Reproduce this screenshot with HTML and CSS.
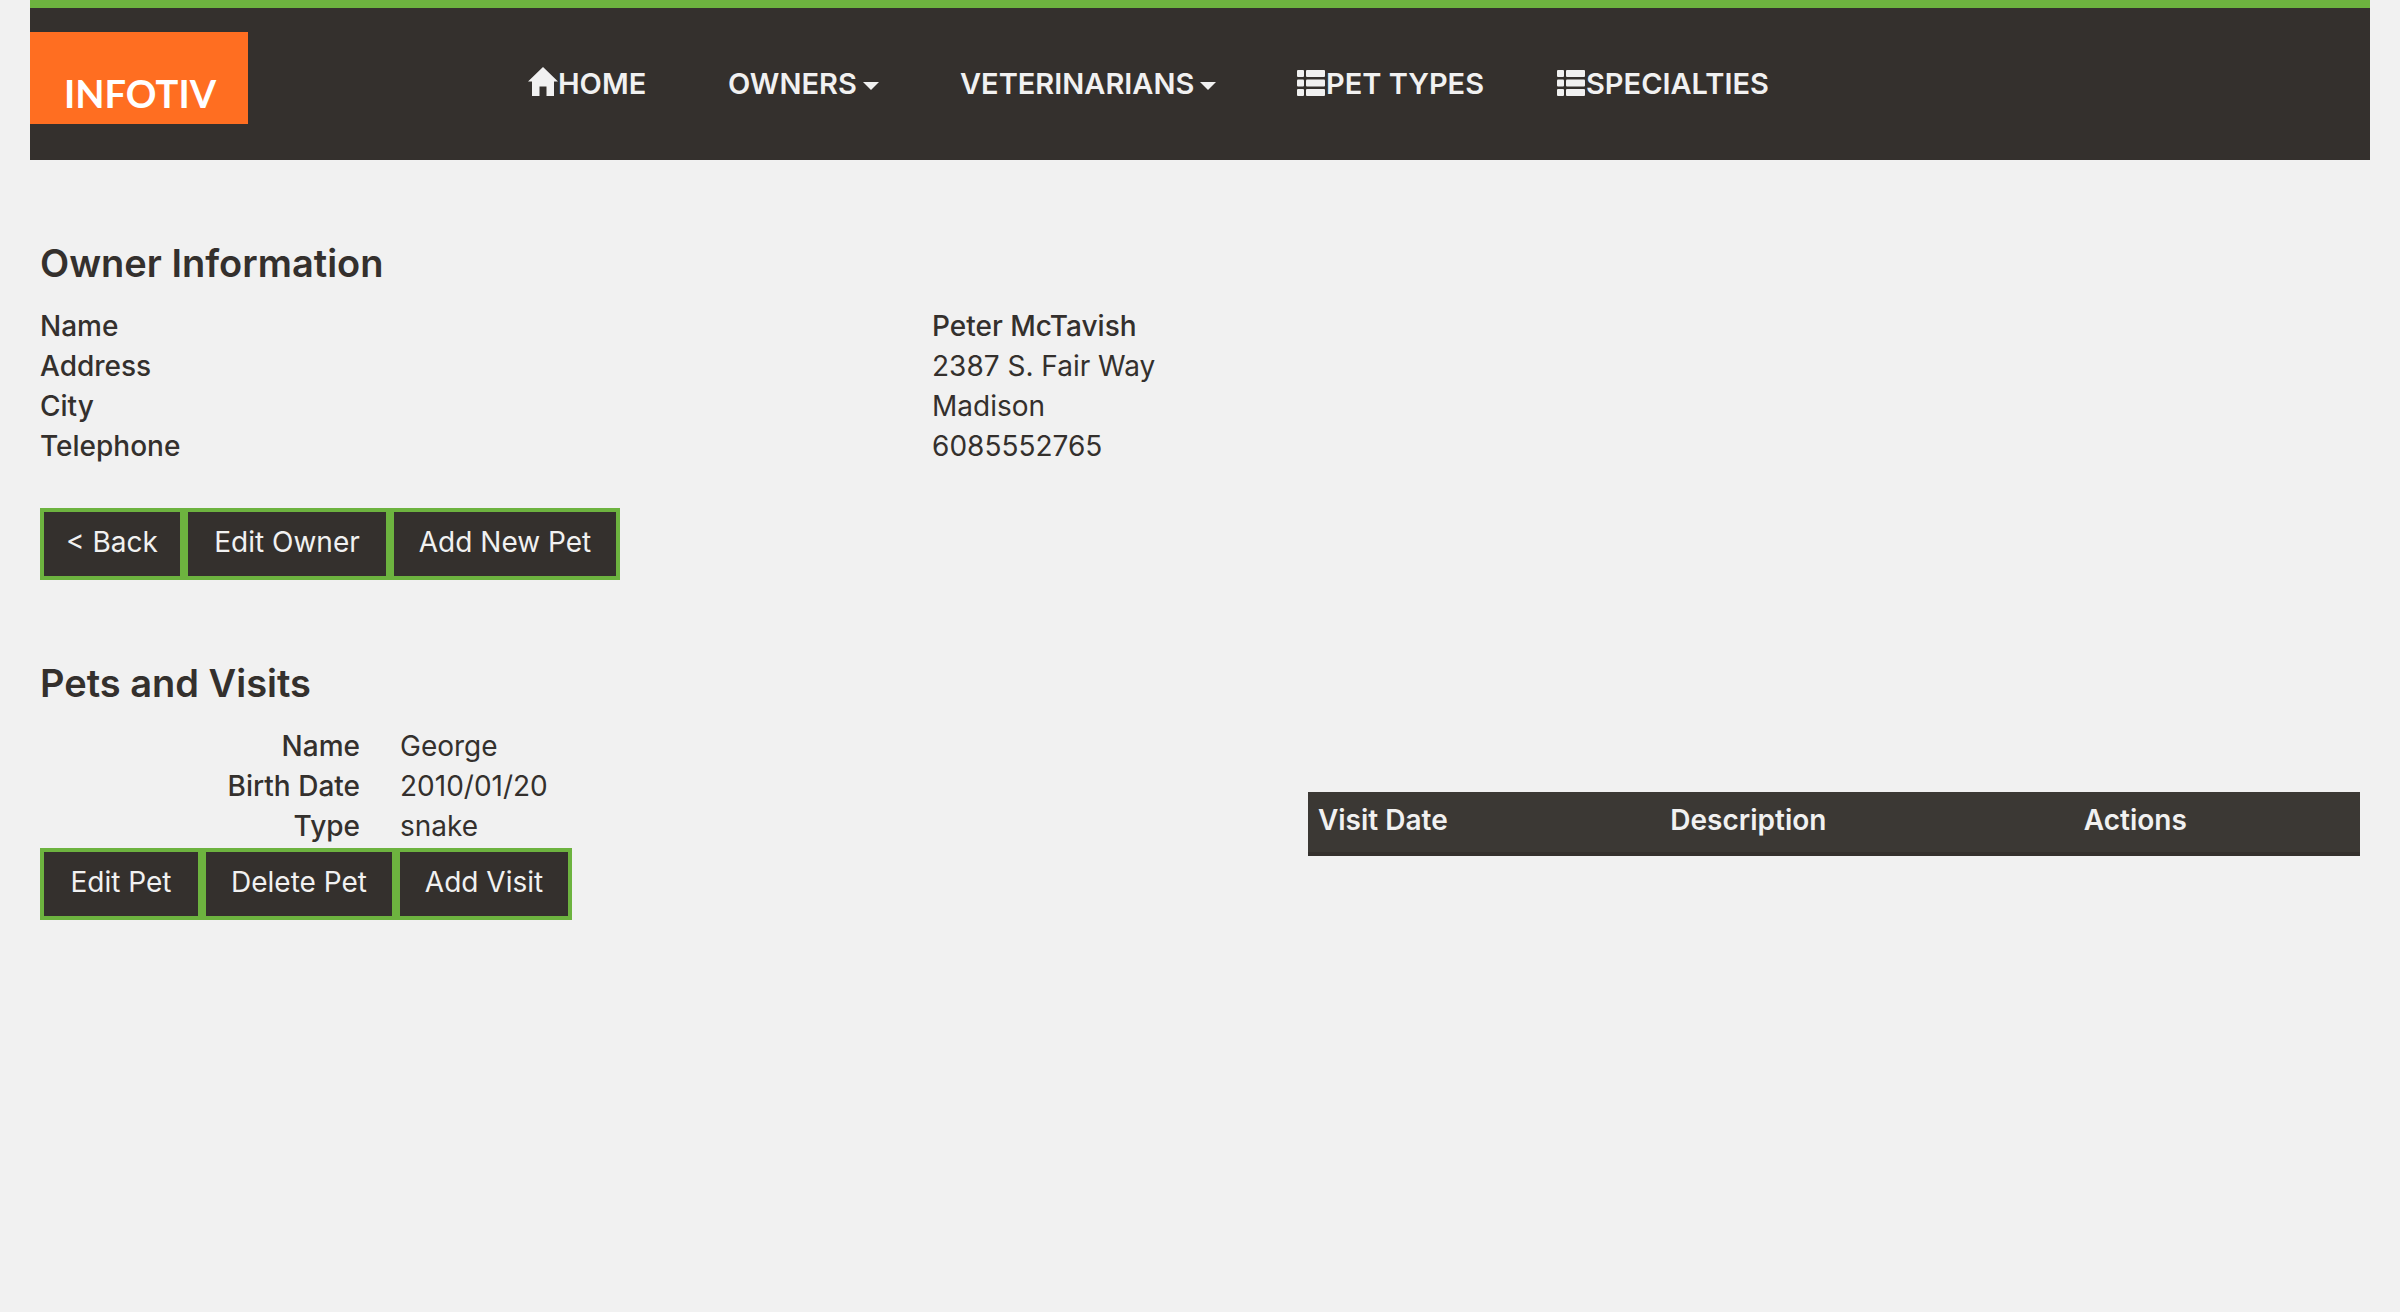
FILE: index.html
```html
<!DOCTYPE html>
<html lang="en">
<head>
<meta charset="utf-8">
<title>Owner Information</title>
<link rel="stylesheet" href="styles.css">
</head>
<body>
<header class="navbar">
  <a class="brand" href="#">INFOTIV</a>
  <nav>
    <ul class="menu">
      <li><a href="#"><svg class="icon" viewBox="0 0 30 30" aria-hidden="true"><path d="M15 1 30 15.500H26V30H18.500V20.500H11.500V30H4V15.500H0Z"/></svg>HOME</a></li>
      <li><a href="#">OWNERS<span class="caret"></span></a></li>
      <li><a href="#">VETERINARIANS<span class="caret"></span></a></li>
      <li><a href="#"><svg class="icon" viewBox="0 0 30 30" aria-hidden="true"><rect x="1" y="4" width="7" height="7" rx="1"/><rect x="10" y="4" width="19" height="7" rx="1"/><rect x="1" y="13.500" width="7" height="7" rx="1"/><rect x="10" y="13.500" width="19" height="7" rx="1"/><rect x="1" y="23" width="7" height="7" rx="1"/><rect x="10" y="23" width="19" height="7" rx="1"/></svg>PET TYPES</a></li>
      <li><a href="#"><svg class="icon" viewBox="0 0 30 30" aria-hidden="true"><rect x="1" y="4" width="7" height="7" rx="1"/><rect x="10" y="4" width="19" height="7" rx="1"/><rect x="1" y="13.500" width="7" height="7" rx="1"/><rect x="10" y="13.500" width="19" height="7" rx="1"/><rect x="1" y="23" width="7" height="7" rx="1"/><rect x="10" y="23" width="19" height="7" rx="1"/></svg>SPECIALTIES</a></li>
    </ul>
  </nav>
</header>
<main class="content">
  <section class="owner">
    <h2>Owner Information</h2>
    <table class="details">
      <tbody>
        <tr><th scope="row">Name</th><td class="strong">Peter McTavish</td></tr>
        <tr><th scope="row">Address</th><td>2387 S. Fair Way</td></tr>
        <tr><th scope="row">City</th><td>Madison</td></tr>
        <tr><th scope="row">Telephone</th><td>6085552765</td></tr>
      </tbody>
    </table>
    <div class="buttons">
      <button type="button">&lt; Back</button><button type="button">Edit Owner</button><button type="button">Add New Pet</button>
    </div>
  </section>
  <section class="pets">
    <h2>Pets and Visits</h2>
    <div class="pet">
      <div class="pet-info">
        <dl>
          <dt>Name</dt><dd>George</dd>
          <dt>Birth Date</dt><dd>2010/01/20</dd>
          <dt>Type</dt><dd>snake</dd>
        </dl>
        <div class="buttons">
          <button type="button">Edit Pet</button><button type="button">Delete Pet</button><button type="button">Add Visit</button>
        </div>
      </div>
      <table class="visits">
        <thead><tr><th scope="col" class="date">Visit Date</th><th scope="col" class="description">Description</th><th scope="col">Actions</th></tr></thead>
      </table>
    </div>
  </section>
</main>
</body>
</html>
```

FILE: styles.css
```css
* { box-sizing: border-box; }

body {
  margin: 0;
  padding: 0 30px;
  background: #f1f1f1;
  color: #34302d;
  font: 28px/40px Inter, "Liberation Sans", sans-serif;
}

.navbar {
  display: flex;
  align-items: flex-start;
  gap: 280px;
  min-height: 160px;
  border-top: 8px solid #6db33f;
  background: #34302d;
}

.brand {
  width: 218px;
  height: 92px;
  margin-top: 24px;
  padding: 36px 34px 0;
  background: #ff6e21;
  color: #fff;
  font: 700 38px/50px Lato, sans-serif;
  text-decoration: none;
}

.menu {
  display: grid;
  grid-template-columns: 200px 232px 336px 260px auto;
  margin: 0;
  padding: 56px 0 0;
  list-style: none;
}

.menu a {
  display: flex;
  align-items: center;
  color: #f1f1f1;
  font-size: 29px;
  font-weight: 600;
  text-decoration: none;
  white-space: nowrap;
}

.icon {
  width: 30px;
  height: 30px;
  margin-bottom: 6px;
  fill: currentColor;
}

.caret {
  margin: 4px 0 0 6px;
  border: 8px solid transparent;
  border-top-color: currentColor;
  border-bottom: 0;
}

.content { padding: 80px 10px 0; }

h2 {
  margin: 0;
  padding-bottom: 20px;
  font-size: 38px;
  line-height: 46px;
  font-weight: 600;
}

.details {
  width: 100%;
  border-collapse: collapse;
}

.details th,
.details td {
  padding: 0;
  text-align: left;
}

.details th {
  width: 38.45%;
  font-weight: 500;
}

.details .strong { font-weight: 500; }

.buttons {
  display: grid;
  justify-content: start;
}

.owner .buttons {
  grid-template-columns: 144px 206px 230px;
  margin-top: 42px;
}

.pet .buttons { grid-template-columns: 162px 194px 176px; }

button {
  height: 72px;
  padding: 0 0 4px;
  border: 4px solid #6db33f;
  background: #34302d;
  color: #f1f1f1;
  font: inherit;
}

.pets { margin-top: 80px; }

.pet {
  display: flex;
  justify-content: space-between;
  align-items: flex-start;
}

dl {
  display: grid;
  grid-template-columns: 320px auto;
  column-gap: 40px;
  margin: 0 0 2px;
}

dt {
  text-align: right;
  font-weight: 500;
}

dd { margin: 0; }

.visits {
  width: 45.35%;
  margin-top: 66px;
  border-spacing: 0;
  table-layout: fixed;
  background: #3b3834;
  color: #f1f1f1;
}

.visits th {
  height: 64px;
  padding: 8px 10px 12px;
  border-bottom: 4px solid #34302d;
  text-align: left;
  vertical-align: top;
  font-weight: 600;
}

.visits .date { width: 33.5%; }

.visits .description { width: 39.3%; }
```
